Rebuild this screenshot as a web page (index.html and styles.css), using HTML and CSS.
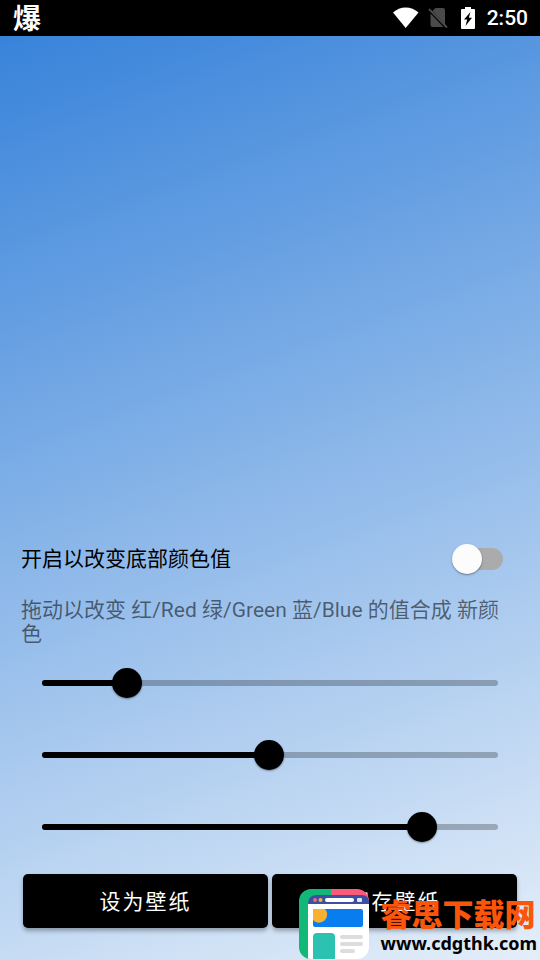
FILE: index.html
```html
<!DOCTYPE html>
<html lang="zh-CN">
<head>
<meta charset="utf-8">
<meta name="viewport" content="width=device-width, initial-scale=1">
<title>壁纸</title>
<link rel="stylesheet" href="styles.css">
</head>
<body>
<header class="status">
  <span class="status-app">爆</span>
  <div class="status-icons">
    <svg width="26" height="22" viewBox="0 0 26 22" aria-hidden="true"><path fill="#fff" d="M0 5.500C3.500 2.400 8 0.500 12.700 0.500s9.300 1.900 12.800 5L12.700 21z"/></svg>
    <svg class="icon-sim" width="20" height="22" viewBox="0 0 20 22" aria-hidden="true"><path fill="#4a4a4a" d="M7.500 1H15q2 0 2 2v14.500L4.500 4zM2.500 6.500L15.500 20H4.500q-2 0-2-2z"/><path d="M1 2L19 20.500" stroke="#4a4a4a" stroke-width="1.800"/></svg>
    <svg class="icon-battery" width="14" height="22" viewBox="0 0 14 22" aria-hidden="true"><path fill="#fff" d="M4 0h6v2h3q1 0 1 1v18q0 1-1 1H1q-1 0-1-1V3q0-1 1-1h3z"/><path fill="#000" d="M9.500 5L3 12.500h3.200L4.500 19 11 10.800H7.800z"/></svg>
    <time class="clock">2:50</time>
  </div>
</header>
<main class="wallpaper">
  <section class="controls">
    <div class="switch-row">
      <label for="base">开启以改变底部颜色值</label>
      <input class="switch" id="base" type="checkbox" role="switch">
    </div>
    <p class="hint">拖动以改变 红/Red 绿/Green 蓝/Blue 的值合成 新颜色</p>
    <div class="sliders">
      <div class="slider"><span class="bar"><span class="fill" style="width:18.6%"></span></span><input type="range" min="0" max="255" step="0.5" value="47.5" aria-label="红/Red"></div>
      <div class="slider"><span class="bar"><span class="fill" style="width:49.8%"></span></span><input type="range" min="0" max="255" step="0.5" value="127" aria-label="绿/Green"></div>
      <div class="slider"><span class="bar"><span class="fill" style="width:83.3%"></span></span><input type="range" min="0" max="255" step="0.5" value="212.5" aria-label="蓝/Blue"></div>
    </div>
    <div class="actions">
      <button type="button">设为壁纸</button>
      <button type="button">保存壁纸</button>
    </div>
  </section>
</main>
<aside class="watermark">
  <svg width="70" height="70" viewBox="0 0 70 70" aria-hidden="true">
    <defs><clipPath id="tile"><rect width="70" height="70" rx="12"/></clipPath></defs>
    <g clip-path="url(#tile)">
      <path fill="#12b877" d="M0 0h32v70H0z"/>
      <path fill="#fb5b7b" d="M32 0h38v20H32z"/>
      <path fill="#fff" d="M9 14h61v56H9z"/>
      <path fill="#3d4fa0" d="M9 15q0-9 9-9h45q7 0 7 8v1H9z"/>
      <circle cx="16" cy="11" r="2" fill="#f0648a"/><circle cx="21.500" cy="11" r="2" fill="#f9b233"/>
      <rect x="26" y="9" width="29" height="4" rx="2" fill="#fff"/><rect x="58" y="9" width="5" height="4" rx="1" fill="#dfe6f8"/>
      <rect x="14" y="20" width="50" height="18" rx="2" fill="#087df0"/>
      <path fill="#fbb130" d="M14 22q0-2 2-2h10a8 8 0 1 1-12 11z"/>
      <path fill="#2bc2b1" d="M14 48q0-4 4-4h14q4 0 4 4v22H14z"/>
      <g fill="#dedcdc"><rect x="41" y="46" width="23" height="4" rx="2"/><rect x="41" y="53" width="23" height="4" rx="2"/><rect x="41" y="60" width="15" height="4" rx="2"/></g>
    </g>
  </svg>
  <div class="mark-text">
    <strong class="mark-name">睿思下载网</strong>
    <span class="mark-url">www.cdgthk.com</span>
  </div>
</aside>
</body>
</html>
```
FILE: styles.css
```css
* { box-sizing: border-box; }

body {
  margin: 0;
  min-height: 100vh;
  display: flex;
  flex-direction: column;
  position: relative;
  font-family: Roboto, "Noto Sans CJK SC", sans-serif;
  font-size: 21px;
  color: #000;
}

.status {
  height: 36px;
  padding: 0 12px 0 13px;
  display: flex;
  align-items: center;
  justify-content: space-between;
  background: #000;
  color: #fff;
}

.status-app {
  font-size: 28px;
  font-weight: 700;
  line-height: 36px;
  padding-top: 3px;
}

.status-icons { display: flex; align-items: center; }
.icon-sim { margin-left: 9px; }
.icon-battery { margin-left: 13px; }
.clock { margin-left: 12px; font-weight: 500; line-height: 38px; }

.wallpaper {
  flex: 1;
  display: flex;
  flex-direction: column;
  justify-content: flex-end;
  padding: 0 21px 32px;
  background: linear-gradient(160deg, #3883da, #e4eef9);
}

.switch-row {
  display: flex;
  justify-content: space-between;
  height: 30px;
  padding-right: 16px;
  line-height: 30px;
}

.switch {
  appearance: none;
  position: relative;
  width: 51px;
  height: 30px;
  margin: 0;
}

.switch::before,
.switch::after {
  content: "";
  position: absolute;
}

.switch::before {
  inset: 4px 0 4px 6px;
  border-radius: 11px;
  background: #ababab;
}

.switch::after {
  left: 0;
  top: 0;
  width: 30px;
  height: 30px;
  border-radius: 50%;
  background: #fcfcfc;
  box-shadow: 0 1px 2px rgba(0, 0, 0, 0.4);
}

.switch:checked::after { left: 21px; }

.hint {
  margin: 24px 0 22px;
  line-height: 24px;
  color: rgba(0, 0, 0, 0.54);
}

.sliders {
  display: grid;
  gap: 42px;
  padding: 0 6px;
}

.slider { display: grid; align-items: center; }
.slider > * { grid-area: 1 / 1; }

.bar {
  height: 6px;
  margin: 0 15px;
  border-radius: 3px;
  background: rgba(0, 0, 0, 0.25);
  overflow: hidden;
}

.fill { display: block; height: 6px; background: #000; }

.slider input {
  appearance: none;
  width: 100%;
  height: 30px;
  margin: 0;
  background: transparent;
}

.slider input::-webkit-slider-thumb {
  appearance: none;
  width: 30px;
  height: 30px;
  border-radius: 50%;
  background: #000;
  box-shadow: 0 1px 2px rgba(0, 0, 0, 0.4);
}

.actions {
  display: grid;
  grid-template-columns: 1fr 1fr;
  gap: 4px;
  margin-top: 32px;
  padding: 0 2px;
}

.actions button {
  height: 54px;
  padding: 0 0 2px;
  border: 0;
  border-radius: 5px;
  background: #000;
  color: #fff;
  font: inherit;
  letter-spacing: 2px;
  box-shadow: 0 3px 4px rgba(0, 0, 0, 0.3);
}

.watermark {
  position: absolute;
  right: 3px;
  bottom: 1px;
  display: flex;
  gap: 12px;
  pointer-events: none;
}

.mark-text { display: flex; flex-direction: column; padding-top: 7px; }

.mark-name {
  font-family: "Noto Sans CJK SC", sans-serif;
  font-size: 31px;
  font-weight: 900;
  line-height: 34px;
  color: #f9560b;
}

.mark-url {
  font-family: "Noto Sans", sans-serif;
  font-size: 18px;
  font-weight: 700;
  line-height: 26px;
}
```
